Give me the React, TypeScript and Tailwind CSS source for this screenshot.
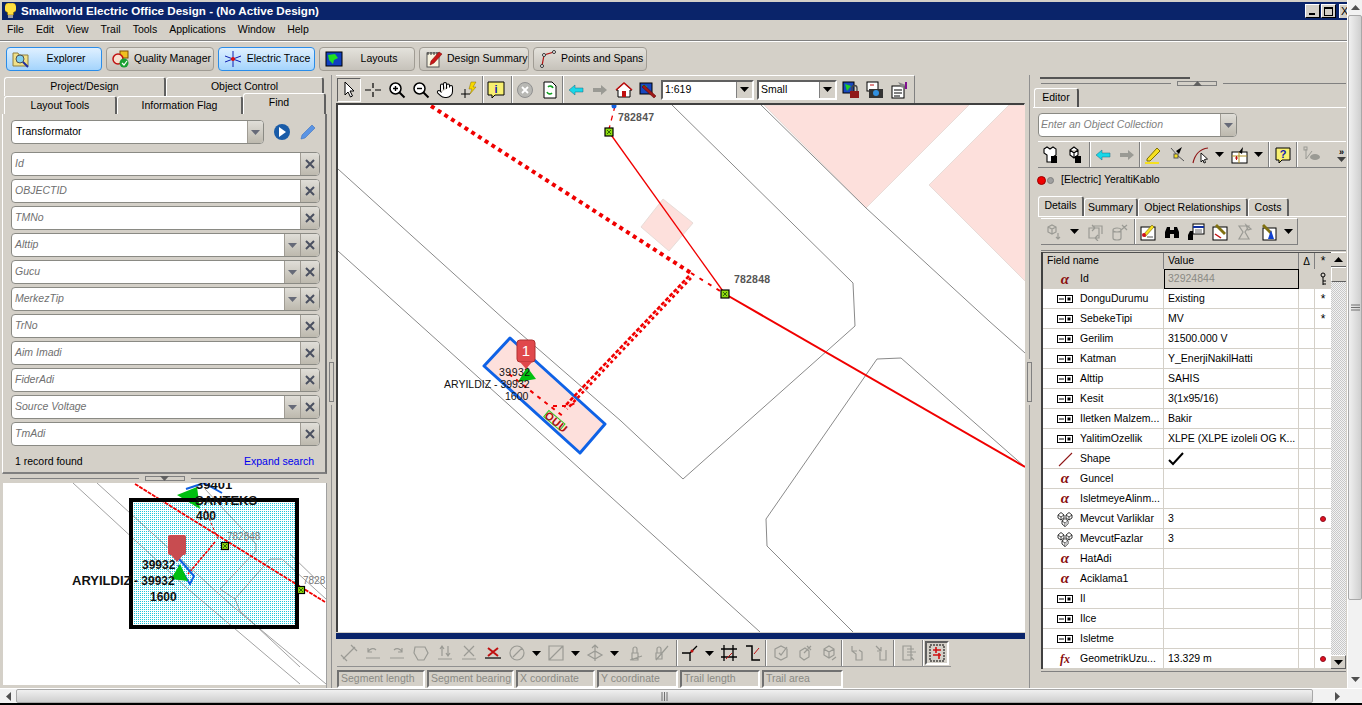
import type { ReactNode } from "react";
import { Hand } from "lucide-react";

const Ic = ({ children, s = 18 }: { children: ReactNode; s?: number }) => (
  <svg width={s} height={s} viewBox="0 0 18 18" fill="none">{children}</svg>
);
const Cell = ({ children, w = "w-[24px]" }: { children?: ReactNode; w?: string }) => (
  <div className={`${w} h-full flex items-center justify-center shrink-0`}>{children}</div>
);
const Sep = () => <div className="w-[2px] h-full shrink-0 border-l border-l-[#808080] border-r border-r-white" />;
const Caret = ({ c = "black" }: { c?: string }) => (
  <svg width="9" height="5" viewBox="0 0 9 5"><path d="M0 0h9L4.5 5z" fill={c} /></svg>
);
const CaretCell = () => <Cell w="w-[15px]"><Caret /></Cell>;

const dg = "#9a9a94";
const ArrowL = ({ c = "#18d8e8" }: { c?: string }) => (
  <Ic><path d="M2 9l6-5v3h8v4H8v3z" fill={c} stroke="#1a6a80" strokeWidth="0.5" /></Ic>
);
const ArrowR = () => <Ic><path d="M16 9l-6-5v3H2v4h8v3z" fill={dg} /></Ic>;

function GreenSq({ x, y, s = 8 }: { x: number; y: number; s?: number }) {
  return (
    <g>
      <rect x={x - s / 2} y={y - s / 2} width={s} height={s} fill="#8edc10" stroke="black" strokeWidth="1.2" />
      <path d={`M${x - 2} ${y - 2}l4 4M${x + 2} ${y - 2}l-4 4`} stroke="#1a4a00" strokeWidth="0.8" />
    </g>
  );
}

function MainMap() {
  return (
    <svg className="block" width="687" height="527" viewBox="337 104 687 527">
      <rect x="337" y="104" width="687" height="527" fill="white" />
      <g fill="#fde0dc" stroke="#e8dcd8" strokeWidth="1">
        <path d="M763 104H968L865 207z" />
        <path d="M1008 104H1025V281L928 184z" />
        <path d="M662 198L692 222L668 250L640 226z" />
        <path d="M509 337L604 423L579 452L483 365z" stroke="none" />
      </g>
      <g fill="none" stroke="#8a8a8a" strokeWidth="1">
        <path d="M337 168L505 320L620 420L682 478L854 325L852 282L671 104" />
        <path d="M337 250L568 458L759 631" />
        <path d="M760 104L865 207L988 320L1024 352" />
        <path d="M1024 466L900 357L876 358L765 518L766 545L852 631" />
      </g>
      <path d="M509 337L604 423L579 452L483 365z" fill="none" stroke="#0f62e6" strokeWidth="3" strokeLinejoin="round" />
      <g fill="none" stroke="#f00000">
        <path d="M608 131L724 293" strokeWidth="1.3" />
        <path d="M724 293L1024 466" strokeWidth="2" />
        <path d="M614 105L608 128" strokeWidth="1.3" strokeDasharray="5 5" />
        <path d="M430 105L690 272" strokeWidth="4" strokeDasharray="4 4" />
        <path d="M690 272L724 293" strokeWidth="2" strokeDasharray="4 6" />
        <path d="M688 275L563 406" strokeWidth="2.6" strokeDasharray="4 2" />
        <path d="M690 277L566 408" strokeWidth="2.6" strokeDasharray="3 3" />
        <path d="M508 373L563 416M552 405L568 405L574 402" strokeWidth="2" strokeDasharray="4 5" />
      </g>
      <circle cx="613" cy="105" r="2.5" fill="#1060e0" />
      <GreenSq x={608} y={131} />
      <GreenSq x={724} y={293} />
      <g transform="rotate(40 553 419)">
        <rect x="543" y="415" width="21" height="8" fill="none" stroke="#28d020" strokeWidth="1" />
        <text x="543" y="423" fontSize="11" fontWeight="700" fill="#b01010" letterSpacing="0.6">OUU</text>
      </g>
      <g fill="#555" fontWeight="700" fontSize="10.5" letterSpacing="0.2">
        <text x="617" y="120">782847</text>
        <text x="733" y="282">782848</text>
      </g>
      <path d="M517 381L535 378L526 366z" fill="#00c010" />
      <g fill="#111" fontSize="10.5">
        <text x="498" y="375" letterSpacing="0.5">39932</text>
        <text x="443" y="387">ARYILDIZ - 39932</text>
        <text x="504" y="399">1600</text>
      </g>
      <rect x="516" y="339" width="18" height="22" rx="3" fill="#e0484c" stroke="#b03030" />
      <path d="M519 361h12l-6 7z" fill="#e0484c" />
      <text x="525" y="355" fontSize="15" fill="white" textAnchor="middle">1</text>
    </svg>
  );
}

function OverviewMap() {
  return (
    <svg className="block" width="323" height="202" viewBox="3 484 323 202">
      <defs>
        <pattern id="stipple" width="2" height="2" patternUnits="userSpaceOnUse">
          <rect width="2" height="2" fill="white" />
          <rect width="1" height="1" fill="#1cc8dc" />
        </pattern>
      </defs>
      <rect x="3" y="484" width="323" height="202" fill="white" />
      <rect x="131" y="501" width="166" height="127" fill="url(#stipple)" />
      <g fill="none" stroke="#8a8a8a" strokeWidth="0.8">
        <path d="M73 484L188 590L300 685" />
        <path d="M97 484L230 605L326 685" />
        <path d="M205 490L256 545L256 552L220 590L235 600" />
        <path d="M270 560L282 560L326 600" />
        <path d="M270 560L235 600L240 612L300 668" />
        <path d="M290 555L326 590" />
      </g>
      <g stroke="#f00000" fill="none">
        <path d="M135 485L325 603" strokeWidth="1.8" strokeDasharray="4 1" />
        <path d="M215 543L188 575" strokeWidth="1.6" strokeDasharray="3 1" />
        <path d="M205 510L218 540" strokeWidth="1" strokeDasharray="3 2" />
      </g>
      <path d="M186 490L204 484L222 494M172 552L194 577L190 585L178 566" fill="none" stroke="#1060e0" strokeWidth="2" />
      <path d="M177 496L197 488L200 510z" fill="#00c010" />
      <path d="M171 580L188 582L180 565z" fill="#00c010" />
      <rect x="131" y="501" width="166" height="127" fill="none" stroke="black" strokeWidth="4" />
      <GreenSq x={225} y={547} s={7} />
      <GreenSq x={301} y={591} s={7} />
      <rect x="168" y="536" width="18" height="20" rx="2" fill="#c84c50" />
      <path d="M171 556h12l-6 7z" fill="#c84c50" />
      <g fill="#111" fontSize="13" fontWeight="700">
        <text x="196" y="490">39401</text>
        <text x="195" y="506">SANTEKS</text>
        <text x="196" y="521" fontSize="12">400</text>
        <text x="72" y="586">ARYILDIZ</text>
        <g fontSize="12">
          <text x="134" y="586">- 39932</text>
          <text x="142" y="570">39932</text>
          <text x="150" y="602">1600</text>
        </g>
      </g>
      <text x="227" y="541" fontSize="10" fill="#777">782848</text>
      <text x="303" y="585" fontSize="10" fill="#777">7828</text>
    </svg>
  );
}

const TopBtn = ({ label, icon, blue, w }: { label: string; icon: ReactNode; blue?: boolean; w: string }) => (
  <div
    className={`${w} h-[24px] flex items-center gap-[4px] pl-[5px] pr-[3px] rounded-[4px] border ${
      blue ? "border-[#2a8ce8] bg-gradient-to-b from-[#dff0ff] to-[#a4d4fc]" : "border-[#a09c94] bg-gradient-to-b from-[#e4e2dc] to-[#c6c2ba]"
    }`}
  >
    <span className="shrink-0 w-[18px] h-[18px]">{icon}</span>
    <span className="flex-1 text-center whitespace-nowrap">{label}</span>
  </div>
);

const Tab = ({ label, w, active }: { label: string; w: string; active?: boolean }) => (
  <div
    className={`${w} ${active ? "h-[21px] pb-[3px] pr-[10px] z-10" : "h-full"} shrink-0 flex items-center justify-center rounded-t-[3px] border-t border-l border-t-white border-l-white border-r-2 border-r-[#606060] bg-[#d4d0c8]`}
  >
    {label}
  </div>
);

const ClearX = () => (
  <div className="w-[19px] h-full shrink-0 flex items-center justify-center border-l border-l-[#a09c94] bg-gradient-to-b from-[#e0ded8] to-[#bdb9ae]">
    <svg width="10" height="10" viewBox="0 0 10 10"><path d="M1 1l8 8M9 1L1 9" stroke="#4a5060" strokeWidth="2" /></svg>
  </div>
);
const DropBtn = () => (
  <div className="w-[16px] h-full shrink-0 flex items-center justify-center border-l border-l-[#a09c94] bg-gradient-to-b from-[#e0ded8] to-[#bdb9ae]">
    <Caret c="#666a78" />
  </div>
);
const Field = ({ name, drop }: { name: string; drop?: boolean }) => (
  <div className="h-[24px] mb-[3px] flex items-stretch rounded-[4px] border border-[#8a8a84] bg-white overflow-hidden">
    <span className="flex-1 pl-[3px] italic text-[#707070] self-center">{name}</span>
    {drop && <DropBtn />}
    <ClearX />
  </div>
);

const fields: [string, boolean?][] = [
  ["Id"], ["OBJECTID"], ["TMNo"], ["Alttip", true], ["Gucu", true], ["MerkezTip", true],
  ["TrNo"], ["Aim Imadi"], ["FiderAdi"], ["Source Voltage", true], ["TmAdi"],
];

function LeftPanel() {
  return (
    <div className="w-[327px] shrink-0 flex flex-col pl-[2px]">
      <div className="h-[19px] mt-[2px] flex pl-[2px]">
        <Tab label="Project/Design" w="w-[162px]" />
        <Tab label="Object Control" w="w-[158px]" />
      </div>
      <div className="h-[21px] -mt-[3px] flex items-end pl-[2px]">
        <div className="h-[18px] flex items-end">
          <Tab label="Layout Tools" w="w-[113px]" />
          <Tab label="Information Flag" w="w-[126px]" />
        </div>
        <Tab label="Find" w="w-[83px]" active />
      </div>
      <div className="h-[360px] flex flex-col border-l border-l-white border-r-2 border-r-[#707070] border-b-2 border-b-[#808080] px-[8px] pt-[6px]">
        <div className="h-[24px] flex items-center mb-[8px]">
          <div className="w-[253px] h-full flex items-stretch rounded-[4px] border border-[#8a8a84] bg-white overflow-hidden">
            <span className="flex-1 pl-[4px] self-center">Transformator</span>
            <DropBtn />
          </div>
          <div className="ml-[10px] w-[16px] h-[16px] rounded-full bg-[#1a5ca8] flex items-center justify-center">
            <svg width="8" height="10" viewBox="0 0 8 10"><path d="M1 0l7 5-7 5z" fill="white" /></svg>
          </div>
          <svg className="ml-[9px]" width="17" height="17" viewBox="0 0 17 17">
            <path d="M2 15l1-4L13 1l3 3L6 14z" fill="#5a94e4" stroke="#3a70c0" strokeWidth="0.6" />
          </svg>
        </div>
        <div className="w-[309px]">
          {fields.map(([n, d]) => <Field key={n} name={n} drop={d} />)}
        </div>
        <div className="flex justify-between mt-[3px] pl-[4px] pr-[3px] h-[20px] items-center">
          <span>1 record found</span>
          <span className="text-[#0000ee]">Expand search</span>
        </div>
      </div>
      <Splitter />
      <div className="flex-1 min-h-0 pl-px border-r border-[#a0a0a0] overflow-hidden"><OverviewMap /></div>
    </div>
  );
}

const Splitter = () => (
  <div className="h-[9px] shrink-0 flex items-center gap-[6px] px-[8px]">
    <div className="flex-1 h-px bg-[#808080]" />
    <div className="w-[40px] h-[5px] border border-[#808080] flex items-center justify-center">
      <Caret c="#606060" />
    </div>
    <div className="flex-1 h-px bg-[#808080]" />
  </div>
);
const VSplit = () => (
  <div className="flex-1 flex flex-col items-center">
    <div className="w-px flex-1 bg-[#909090]" />
    <div className="w-[5px] h-[40px] my-[3px] border border-[#808080]" />
    <div className="w-px flex-1 bg-[#909090]" />
  </div>
);

function MapToolbar() {
  return (
    <div className="w-[579px] h-[28px] flex items-center border-r border-r-[#808080] border-t border-t-white">
      <Cell w="w-[25px]">
        <div className="w-[24px] h-[24px] flex items-center justify-center border border-t-[#606060] border-l-[#606060] border-b-white border-r-white">
          <Ic><path d="M5 1v13l3-3 2.5 5 2-1-2.5-5h4z" fill="white" stroke="black" /></Ic>
        </div>
      </Cell>
      <Cell><Ic><path d="M1 9h6M11 9h6M9 2v5M9 11v5" stroke="black" strokeWidth="1.2" /></Ic></Cell>
      <Cell><Ic><circle cx="7.5" cy="7.5" r="5.5" stroke="black" strokeWidth="1.5" fill="white" /><path d="M11.5 11.5l5 5" stroke="black" strokeWidth="2" /><path d="M5 7.5h5M7.5 5v5" stroke="black" strokeWidth="1.4" /></Ic></Cell>
      <Cell><Ic><circle cx="7.5" cy="7.5" r="5.5" stroke="black" strokeWidth="1.5" fill="white" /><path d="M11.5 11.5l5 5" stroke="black" strokeWidth="2" /><path d="M5 7.5h5" stroke="black" strokeWidth="1.4" /></Ic></Cell>
      <Cell><Hand size={18} fill="white" stroke="black" strokeWidth={1.4} /></Cell>
      <Cell><Ic><path d="M1 13h9M5 8v9" stroke="black" /><path d="M11 1h5l-3 5h3l-6 7 2-5H9z" fill="#f6d800" stroke="#8a7000" strokeWidth="0.5" /></Ic></Cell>
      <div className="w-[1px]" />
      <Sep />
      <Cell><Ic><path d="M1 1h16v13H8l-3 3v-3H1z" fill="#f8f070" stroke="black" /><text x="9" y="12" fontSize="11" fontWeight="700" fill="#1020b0" textAnchor="middle">i</text></Ic></Cell>
      <Cell w="w-[3px]" />
      <Sep />
      <Cell><Ic><circle cx="9" cy="9" r="7.5" fill="#b8b8b4" stroke="#909090" /><path d="M6 6l6 6M12 6l-6 6" stroke="white" strokeWidth="1.8" /></Ic></Cell>
      <Cell w="w-[25px]"><Ic><path d="M3 1h8l4 4v12H3z" fill="white" stroke="black" /><path d="M7 6a3 3 0 015 1M11 12a3 3 0 01-5-1" stroke="#10a020" strokeWidth="1.6" /></Ic></Cell>
      <Sep />
      <Cell><ArrowL /></Cell>
      <Cell><ArrowR /></Cell>
      <Cell><Ic><path d="M1 9l8-7 8 7h-2v7H3V9z" fill="white" stroke="black" /><path d="M1 9l8-7 8 7" stroke="#c01010" strokeWidth="1.6" /><rect x="7" y="10" width="4" height="6" fill="#c01010" /></Ic></Cell>
      <Cell><Ic><rect x="1" y="2" width="12" height="11" fill="#1848c0" stroke="black" /><path d="M3 4l5 1-2 4z" fill="#20d020" /><path d="M5 4l12 11-2 2L3 6z" fill="#a01818" stroke="#500" strokeWidth="0.5" /></Ic></Cell>
      <div className="ml-[1px] w-[93px] h-[20px] flex items-center border-2 border-t-[#606060] border-l-[#606060] border-b-white border-r-white bg-white pl-[2px] justify-between">
        <span>1:619</span>
        <div className="w-[16px] h-full flex items-center justify-center bg-[#d4d0c8] border-l border-[#808080]"><Caret /></div>
      </div>
      <div className="ml-[3px] w-[80px] h-[20px] flex items-center border-2 border-t-[#606060] border-l-[#606060] border-b-white border-r-white bg-white pl-[2px] justify-between">
        <span>Small</span>
        <div className="w-[16px] h-full flex items-center justify-center bg-[#d4d0c8] border-l border-[#808080]"><Caret /></div>
      </div>
      <div className="ml-[2px]" />
      <Cell><Ic><rect x="1" y="1" width="11" height="11" fill="#1848c0" stroke="black" /><path d="M3 3l6 2-4 5z" fill="#20d020" /><rect x="8" y="10" width="9" height="7" fill="#901818" /><path d="M10 10V7a2.5 2.5 0 015 0v3" stroke="#444" strokeWidth="1.3" /></Ic></Cell>
      <Cell><Ic><rect x="1" y="1" width="11" height="9" fill="white" stroke="black" /><path d="M4 4h4" stroke="#c01010" /><rect x="3" y="8" width="14" height="9" fill="#333" /><circle cx="10" cy="12" r="3" fill="#3090e0" /></Ic></Cell>
      <Cell><Ic><rect x="2" y="5" width="12" height="12" fill="white" stroke="black" /><path d="M4 9h8M4 12h8M4 15h6" stroke="black" /><path d="M8 1l8 3-4 3z" fill="#888" /><rect x="15" y="1" width="2" height="7" fill="#801090" /></Ic></Cell>
    </div>
  );
}

const gs = { stroke: dg, fill: "none", strokeWidth: 1.2 };
const Gi = ({ d }: { d: string }) => <Ic><path d={d} {...gs} /></Ic>;

function BottomToolbar() {
  return (
    <div className="w-[614px] h-[27px] flex items-center border-b border-b-[#909090]">
      <Cell><Gi d="M3 15L15 3M1 11l6 6M11 1l6 6" /></Cell>
      <Cell><Gi d="M2 14h14M4 8a5 5 0 018-2M4 4v4h4" /></Cell>
      <Cell><Gi d="M2 14h14M14 8a5 5 0 00-8-2M14 4v4h-4" /></Cell>
      <Cell><Gi d="M3 3h10l3 6-4 7H6L2 9z" /></Cell>
      <Cell><Gi d="M2 15h14M6 2v10M12 2v10M4 5l2-3 2 3M10 9l2 3 2-3" /></Cell>
      <Cell><Gi d="M4 2l10 10M14 2L4 12M2 15h14" /></Cell>
      <Cell><Ic><path d="M4 4l10 8M14 4L4 12" stroke="#c01010" strokeWidth="2" /><path d="M1 14h16" stroke="#202020" strokeWidth="1.4" /></Ic></Cell>
      <Cell><Gi d="M9 2a7 7 0 110 14 7 7 0 010-14zM5 13L14 4" /></Cell>
      <CaretCell />
      <Cell><Gi d="M2 2h14v14H2zM2 16L16 2" /></Cell>
      <CaretCell />
      <Cell><Gi d="M9 1v16M2 11l7-4 7 4-7 4zM6 4l3-3 3 3" /></Cell>
      <CaretCell />
      <div className="w-[3px]" />
      <Cell><Gi d="M2 16l12-4M4 16V9h6v7zM5 9V5a2 2 0 014 0v4" /></Cell>
      <Cell><Gi d="M4 16L16 2M4 9h6v6H4zM5 9V5a2 2 0 014 0v4" /></Cell>
      <div className="w-[3px]" />
      <Sep />
      <Cell><Ic><path d="M1 9h8M9 9v8M9 9l7-7" stroke="black" strokeWidth="1.3" /><circle cx="11" cy="7" r="1.5" fill="#c01010" /></Ic></Cell>
      <CaretCell />
      <Cell><Ic><path d="M4 1v16M13 1v16M1 5h16M1 13h16" stroke="black" strokeWidth="1.3" /><path d="M6 15l6-6" stroke="#c01010" /></Ic></Cell>
      <Cell><Ic><path d="M2 2h6v14h8" stroke="black" strokeWidth="1.5" /><path d="M10 10l5-6" stroke="#c01010" /></Ic></Cell>
      <Sep />
      <div className="w-[2px]" />
      <Cell><Gi d="M3 5l6-3 6 3v8l-6 3-6-3zM7 9l2 2 6-8" /></Cell>
      <Cell><Gi d="M4 7l5-3 4 3v6l-5 3-4-3zM8 9l7-7M11 2l4 4" /></Cell>
      <Cell><Gi d="M4 5l5-3 5 3v6l-5 3-5-3zM9 8v6M4 5l5 3 5-3M12 16l4-3" /></Cell>
      <Sep />
      <div className="w-[2px]" />
      <Cell><Gi d="M4 2v5h5M4 7l4 3v6h6V8l-3-2" /></Cell>
      <Cell><Gi d="M4 2l5 5M9 3v4H5M8 8v8h6V6" /></Cell>
      <Sep />
      <div className="w-[2px]" />
      <Cell><Gi d="M3 2h8v14H3zM7 5h7M7 8h9M7 11h6M11 13l3 3" /></Cell>
      <div className="w-px" />
      <Sep />
      <div className="w-[24px] h-[24px] ml-px flex items-center justify-center border-2 border-t-[#606060] border-l-[#606060] border-b-white border-r-white">
        <Ic><rect x="2" y="1" width="14" height="16" fill="none" stroke="black" strokeDasharray="2 1" /><path d="M5 6h8M8 3v6M5 11h8M11 9v6" stroke="#d01010" strokeWidth="1.6" /></Ic>
      </div>
    </div>
  );
}

const Stat = ({ label, w }: { label: string; w: string }) => (
  <div className={`${w} h-[18px] shrink-0 flex items-center pl-[2px] whitespace-nowrap overflow-hidden border-2 border-t-[#707070] border-l-[#707070] border-b-white border-r-white text-[#8a8a84]`}>
    {label}
  </div>
);

function Center() {
  return (
    <div className="w-[689px] shrink-0 flex flex-col">
      <MapToolbar />
      <div className="w-[689px] h-[529px] border-t-2 border-t-[#404040] border-l-2 border-l-[#404040] border-r border-r-white">
        <MainMap />
      </div>
      <div className="h-[6px] mt-px bg-[#0a246a]" />
      <div className="mt-px pl-px"><BottomToolbar /></div>
      <div className="mt-[3px] pl-px flex gap-[2px]">
        <Stat label="Segment length" w="w-[88px]" />
        <Stat label="Segment bearing" w="w-[87px]" />
        <Stat label="X coordinate" w="w-[79px]" />
        <Stat label="Y coordinate" w="w-[81px]" />
        <Stat label="Trail length" w="w-[80px]" />
        <Stat label="Trail area" w="w-[81px]" />
      </div>
    </div>
  );
}

const Alpha = () => <span className="text-[#8a1010] italic font-bold text-[15px] leading-none [font-family:'Liberation_Serif',serif]">α</span>;
const Fx = () => <span className="text-[#8a1010] italic font-bold text-[12px] leading-none [font-family:'Liberation_Serif',serif]">fx</span>;
const FieldIc = () => (
  <svg width="16" height="8" viewBox="0 0 16 8"><rect x="0.5" y="0.5" width="8" height="7" fill="white" stroke="black" /><rect x="8.5" y="0.5" width="7" height="7" fill="white" stroke="black" /><path d="M2 4h5" stroke="black" /><rect x="10.5" y="2.5" width="3" height="3" fill="black" /></svg>
);
const LineIc = () => <svg width="16" height="16" viewBox="0 0 16 16"><path d="M2 15L15 2" stroke="#901818" strokeWidth="1.1" /></svg>;
const CubeIc = () => (
  <svg width="16" height="16" viewBox="0 0 16 16">
    <path d="M1 4l3-2.500 3 2.500v3L4 9 1 7zM9 4l3-2.500 3 2.500v3l-3 2-3-2zM5 10l3-2.500 3 2.500v3l-3 2.500L5 13z" fill="white" stroke="#222" strokeWidth="0.9" />
    <path d="M1 4l3 2 3-2M4 6v3M9 4l3 2 3-2M12 6v3M5 10l3 2 3-2M8 12v3.500" stroke="#222" strokeWidth="0.8" fill="none" />
    <path d="M8 12l3-2v3l-3 2.500z" fill="#c0c0c0" />
  </svg>
);
const Dot = () => <span className="w-[6px] h-[6px] rounded-full bg-[#e01020] border border-[#901020] block" />;
const Star = () => <span className="text-[12px] leading-none">*</span>;

type Row = { i: ReactNode; n: string; v?: ReactNode; m?: ReactNode };
const fi = <FieldIc />;
const al = <Alpha />;
const cu = <CubeIc />;
const rows: Row[] = [
  { i: fi, n: "DonguDurumu", v: "Existing", m: <Star /> },
  { i: fi, n: "SebekeTipi", v: "MV", m: <Star /> },
  { i: fi, n: "Gerilim", v: "31500.000 V" },
  { i: fi, n: "Katman", v: "Y_EnerjiNakilHatti" },
  { i: fi, n: "Alttip", v: "SAHIS" },
  { i: fi, n: "Kesit", v: "3(1x95/16)" },
  { i: fi, n: "Iletken Malzem...", v: "Bakir" },
  { i: fi, n: "YalitimOzellik", v: "XLPE (XLPE izoleli OG K..." },
  { i: <LineIc />, n: "Shape", v: <svg width="16" height="14" viewBox="0 0 16 14"><path d="M1 8l4 4L15 1" stroke="black" strokeWidth="2" fill="none" /></svg> },
  { i: al, n: "Guncel" },
  { i: al, n: "IsletmeyeAlinm..." },
  { i: cu, n: "Mevcut Varliklar", v: "3", m: <Dot /> },
  { i: cu, n: "MevcutFazlar", v: "3" },
  { i: al, n: "HatAdi" },
  { i: al, n: "Aciklama1" },
  { i: fi, n: "Il" },
  { i: fi, n: "Ilce" },
  { i: fi, n: "Isletme" },
  { i: <Fx />, n: "GeometrikUzu...", v: "13.329 m", m: <Dot /> },
];

function Table() {
  return (
    <div className="mt-[5px] ml-[8px] border-t border-t-[#808080]">
      <div className="mt-px flex border-l-2 border-l-[#404040]">
        <div className="w-[288px]">
          <div className="h-[17px] flex border-t border-t-[#505050] bg-[#d4d0c8]">
            <div className="w-[121px] pl-[4px] flex items-center border-r border-r-[#808080]">Field name</div>
            <div className="w-[135px] pl-[4px] flex items-center border-r border-r-[#808080]">Value</div>
            <div className="w-[16px] flex items-center justify-center border-r border-r-[#808080] text-[10px]">Δ</div>
            <div className="w-[16px] flex items-center justify-center"><Star /></div>
          </div>
          <div className="h-[20px] flex bg-[#d4d0c8]">
            <div className="w-[36px] flex items-center justify-center pl-[8px]"><Alpha /></div>
            <div className="w-[85px] pl-[1px] flex items-center">Id</div>
            <div className="w-[135px] pl-[3px] flex items-center border border-black text-[#8a8a84]">32924844</div>
            <div className="w-[16px]" />
            <div className="w-[16px] flex items-center justify-center">
              <svg width="8" height="14" viewBox="0 0 8 14"><circle cx="4" cy="3" r="2" fill="none" stroke="black" /><path d="M4 5v8M4 9h3M4 12h3" stroke="black" /></svg>
            </div>
          </div>
          {rows.map((r) => (
            <div key={r.n} className="h-[20px] flex bg-white border-b border-b-[#d4d0c8]">
              <div className="w-[36px] flex items-center justify-center pl-[8px] shrink-0">{r.i}</div>
              <div className="w-[85px] pl-[1px] flex items-center whitespace-nowrap overflow-hidden border-r border-r-[#d4d0c8] shrink-0">{r.n}</div>
              <div className="w-[135px] pl-[4px] flex items-center whitespace-nowrap overflow-hidden border-r border-r-[#d4d0c8] shrink-0">{r.v}</div>
              <div className="w-[16px] border-r border-r-[#d4d0c8] shrink-0" />
              <div className="w-[16px] flex items-center justify-center shrink-0">{r.m}</div>
            </div>
          ))}
        </div>
        <div className="w-[15px] flex flex-col bg-[repeating-conic-gradient(#c8c8c8_0_25%,#f2f2f2_0_50%)] bg-[length:2px_2px]">
          <div className="h-[15px] flex items-center justify-center bg-[#d4d0c8] border-b border-b-[#606060] border-t border-t-white"><svg width="9" height="5" viewBox="0 0 9 5"><path d="M0 5h9L4.5 0z" fill="black" /></svg></div>
          <div className="h-[15px] bg-[#d4d0c8] border-b border-b-[#606060] border-t border-t-white border-l border-l-white" />
          <div className="flex-1" />
          <div className="h-[14px] flex items-center justify-center bg-[#d4d0c8] border-b border-b-[#606060] border-r border-r-[#606060] border-t border-t-white"><Caret /></div>
        </div>
      </div>
      <div className="mt-[2px] h-px bg-[#808080]" />
    </div>
  );
}

function RightPanel() {
  return (
    <div className="w-[313px] shrink-0 flex flex-col">
      <div className="mt-[2px] ml-[7px] w-[150px] h-[2px] bg-[#555]" />
      <div className="h-[9px] flex items-center gap-[6px] pl-[8px]">
        <div className="flex-1 h-px bg-[#808080]" />
        <div className="w-[40px] h-[5px] border border-[#808080] flex items-center justify-center"><svg width="9" height="5" viewBox="0 0 9 5"><path d="M0 5h9L4.5 0z" fill="#606060" /></svg></div>
        <div className="w-[123px] h-px bg-[#808080]" />
      </div>
      <div className="h-[20px] flex border-b border-b-white pl-px">
        <div className="w-[45px] flex items-center justify-center rounded-t-[3px] border-t border-l border-t-white border-l-white border-r-2 border-r-[#505050]">Editor</div>
      </div>
      <div className="mt-[5px] ml-[5px] w-[199px] h-[24px] flex items-stretch rounded-[4px] border border-[#8a8a84] bg-white overflow-hidden">
        <span className="flex-1 pl-[2px] italic text-[#808080] self-center">Enter an Object Collection</span>
        <DropBtn />
      </div>
      <div className="mt-[4px] ml-[5px] h-[27px] flex items-center border-y border-t-white border-b-[#808080]">
        <Cell><Ic><path d="M3 3l3-2 3 2 3-2 3 2v6l-3 2v5H6V9L3 7z" fill="white" stroke="black" strokeWidth="1.1" /><rect x="10" y="10" width="6" height="7" fill="black" /></Ic></Cell>
        <Cell><Ic><path d="M5 4l4-3 4 3v5l-4 3-4-3zM5 4l4 3 4-3M9 7v5" fill="white" stroke="black" strokeWidth="1.1" /><rect x="10" y="10" width="6" height="7" fill="black" /></Ic></Cell>
        <div className="w-[3px]" /><Sep />
        <Cell><ArrowL /></Cell>
        <Cell><ArrowR /></Cell>
        <Sep />
        <Cell><Ic><path d="M3 13L13 2l3 3L6 15H3z" fill="#f6e020" stroke="#807000" /><path d="M1 17h14" stroke="#f6e020" strokeWidth="2" /></Ic></Cell>
        <Cell><Ic><path d="M3 2l6 7 7 6" stroke="#555" /><rect x="6" y="8" width="4" height="4" fill="#f6e020" stroke="#555" /><path d="M14 1l-3 7-3-3z" fill="black" /></Ic></Cell>
        <Cell><Ic><path d="M1 17C3 8 8 3 16 2" stroke="#901818" strokeWidth="1.2" /><path d="M9 7v9l2-2 1 3 1.500-.5-1-3 3-.5z" fill="white" stroke="black" strokeWidth="0.9" /></Ic></Cell>
        <Cell w="w-[14px]"><Caret /></Cell>
        <Cell w="w-[25px]"><Ic><rect x="2" y="6" width="15" height="11" fill="white" stroke="black" /><path d="M2 10h15M9 6v11" stroke="#b09020" /><path d="M13 1l-1 7-3-2z" fill="black" /><path d="M5 12h3M6.500 10v4" stroke="#c01010" /></Ic></Cell>
        <Cell w="w-[14px]"><Caret /></Cell>
        <div className="w-[3px]" /><Sep />
        <Cell w="w-[26px]"><Ic><path d="M2 2h14v12H8l-3 3v-3H2z" fill="#f8f070" stroke="black" /><text x="9" y="12" fontSize="11" fontWeight="700" fill="#1020b0" textAnchor="middle">?</text></Ic></Cell>
        <Sep />
        <Cell w="w-[28px]"><Ic><path d="M3 3v10l6-8" stroke={dg} /><rect x="1" y="1" width="3" height="3" fill="none" stroke={dg} /><ellipse cx="12" cy="11" rx="5" ry="3" fill={dg} /></Ic></Cell>
        <div className="w-[12px]" />
        <div className="flex flex-col items-center gap-[1px]">
          <span className="text-[9px] font-bold leading-[8px]">»</span>
          <Caret c="#404040" />
        </div>
      </div>
      <div className="h-[22px] mt-px flex items-center pl-[4px] gap-[1px]">
        <span className="w-[9px] h-[9px] rounded-full bg-[#f00000] border border-[#900]" />
        <span className="w-[7px] h-[7px] rounded-full bg-[#a0a0a0] border border-[#808080]" />
        <span className="ml-[6px]">[Electric] YeraltiKablo</span>
      </div>
      <div className="mt-[6px] ml-[5px] h-[20px] flex items-end border-b border-b-white">
        <div className="w-[46px] h-[20px] pb-[2px] flex items-center justify-center rounded-t-[3px] border-t border-l border-t-white border-l-white border-r-2 border-r-[#606060]">Details</div>
        <div className="w-[54px] h-[18px] flex items-center justify-center rounded-t-[3px] border-t border-l border-t-white border-l-white border-r-2 border-r-[#606060]">Summary</div>
        <div className="w-[110px] h-[18px] flex items-center justify-center rounded-t-[3px] border-t border-l border-t-white border-l-white border-r-2 border-r-[#606060]">Object Relationships</div>
        <div className="w-[41px] h-[18px] flex items-center justify-center rounded-t-[3px] border-t border-l border-t-white border-l-white border-r-2 border-r-[#606060]">Costs</div>
      </div>
      <div className="mt-px ml-[8px] w-[257px] h-[27px] flex items-center border-b border-b-[#808080] border-r border-r-[#808080] border-t border-t-white">
        <Cell><Gi d="M4 4l4-2 4 2v5l-4 2-4-2zM4 4l4 2 4-2M8 6v5M14 10v6M12 14l2 2 2-2" /></Cell>
        <Cell w="w-[18px]"><Caret /></Cell>
        <Cell><Gi d="M3 5h10v10H3zM6 3h10v8M6 8l3-3-3-3M12 12l-3 3 3 3" /></Cell>
        <Cell w="w-[24px]"><Gi d="M3 7a4 2 0 008 0 4 2 0 00-8 0v8a4 2 0 008 0V7M11 7l6-5M12 2l5 5" /></Cell>
        <div className="w-[3px]" /><Sep />
        <Cell><Ic><rect x="2" y="4" width="14" height="13" fill="white" stroke="black" /><path d="M4 12L13 2l2 2-9 10z" fill="#f6e020" stroke="#706000" strokeWidth="0.6" /><circle cx="5" cy="12" r="2" fill="#d01020" /><path d="M8 14h6" stroke="#555" /></Ic></Cell>
        <Cell><Ic><path d="M2 15V9l2-5h3v11zM16 15V9l-2-5h-3v11zM7 7h4v4H7z" fill="black" /></Ic></Cell>
        <Cell><Ic><rect x="6" y="1" width="11" height="10" fill="white" stroke="black" /><path d="M6 4h11" stroke="#1030a0" strokeWidth="2" /><path d="M8 7h7M8 9h7" stroke="#666" /><path d="M1 17v-5l2-4h3v9zM8 17v-6" fill="black" /></Ic></Cell>
        <Cell><Ic><rect x="2" y="4" width="14" height="13" fill="white" stroke="black" /><path d="M4 3l9 9 2-2-9-9z" fill="#807010" /><path d="M4 11l6 4" stroke="#c01010" strokeWidth="1.500" /></Ic></Cell>
        <Cell><Gi d="M4 3l10 0-4 6 4 7H4l4-7zM11 2l5 4-3 1z" /></Cell>
        <Cell><Ic><rect x="4" y="5" width="13" height="12" fill="white" stroke="black" /><path d="M3 3l8 8 2-2-8-8z" fill="#807010" /><path d="M9 16l3-9 3 9" fill="#1040d0" /></Ic></Cell>
        <Cell w="w-[16px]"><Caret /></Cell>
      </div>
      <Table />
    </div>
  );
}

const VScroll = () => (
  <div className="w-[15px] shrink-0 flex flex-col bg-[#f2f2f2] border-l border-l-white">
    <div className="h-[15px] flex items-center justify-center"><svg width="9" height="5" viewBox="0 0 9 5"><path d="M0 5h9L4.5 0z" fill="#505050" /></svg></div>
    <div className="h-[585px] shrink-0 flex items-center justify-center rounded-[2px] border border-[#a8a8a8] bg-gradient-to-r from-[#f0f0f0] to-[#cfcfcf]">
      <svg width="9" height="7" viewBox="0 0 9 7"><path d="M0 1h9M0 3.500h9M0 6h9" stroke="#707070" /></svg>
    </div>
    <div className="flex-1 flex items-end justify-center pb-[6px]"><Caret c="#505050" /></div>
  </div>
);
const HScroll = () => (
  <div className="h-[15px] shrink-0 flex items-center bg-[#f2f2f2] border-t border-t-white">
    <div className="w-[16px] flex justify-center"><svg width="5" height="9" viewBox="0 0 5 9"><path d="M5 0v9L0 4.500z" fill="#505050" /></svg></div>
    <div className="w-[1297px] h-[14px] flex items-center justify-center rounded-[2px] border border-[#a8a8a8] bg-gradient-to-b from-[#f0f0f0] to-[#cfcfcf]">
      <svg width="7" height="9" viewBox="0 0 7 9"><path d="M1 0v9M3.500 0v9M6 0v9" stroke="#707070" /></svg>
    </div>
    <div className="flex-1 flex justify-start pl-[22px]"><svg width="5" height="9" viewBox="0 0 5 9"><path d="M0 0v9l5-4.500z" fill="#505050" /></svg></div>
  </div>
);

export default function App() {
  const menus = ["File", "Edit", "View", "Trail", "Tools", "Applications", "Window", "Help"];
  return (
    <div className="w-[1362px] h-[705px] overflow-hidden flex flex-col bg-[#d4d0c8] text-[10.5px] text-black [font-family:'Liberation_Sans',Arial,sans-serif]">
      <div className="flex-1 min-h-0 flex">
        <div className="w-[1347px] shrink-0 flex flex-col pt-[2px]">
          <div className="h-[18px] ml-[2px] flex items-center bg-[#0a246a] text-white font-bold text-[11.6px]">
            <svg className="ml-[3px] mr-[5px]" width="11" height="16" viewBox="0 0 11 16"><path d="M5.500 0a5 5 0 013 9.500V12h-6V9.500A5 5 0 015.500 0z" fill="#ffe040" stroke="#806000" strokeWidth="0.6" /><rect x="3" y="12" width="5" height="3" fill="#a0a0a0" /></svg>
            <span>Smallworld Electric Office Design - (No Active Design)</span>
            <div className="ml-auto flex gap-px items-center">
              <div className="w-[15px] h-[14px] bg-[#d4d0c8] border border-t-white border-l-white border-b-black border-r-black flex items-end justify-center pb-[2px] pr-[2px]"><div className="w-[6px] h-[2px] bg-black" /></div>
              <div className="w-[15px] h-[14px] bg-[#d4d0c8] border border-t-white border-l-white border-b-black border-r-black flex items-center justify-center"><div className="w-[9px] h-[9px] border border-black border-t-2" /></div>
              <div className="ml-[2px] w-[8px] h-[14px] bg-[#d4d0c8] border-t border-l border-t-white border-l-white overflow-hidden font-normal text-[11px] leading-[12px] text-black pl-px">X</div>
            </div>
          </div>
          <div className="h-[20px] ml-[7px] flex items-center gap-[12px]">
            {menus.map((m) => <span key={m}>{m}</span>)}
          </div>
          <div className="border-t border-t-[#808080] border-b border-b-white" />
          <div className="mt-[5px] ml-[6px] flex gap-[4px]">
            <TopBtn w="w-[96px]" blue label="Explorer" icon={<Ic><path d="M1 3h5l1 2h9v11H1z" fill="#f0e088" stroke="#908040" /><circle cx="8" cy="9" r="4" fill="#80d0f0" stroke="#505050" /><path d="M11 12l5 5" stroke="#2030a0" strokeWidth="2" /></Ic>} />
            <TopBtn w="w-[108px]" label="Quality Manager" icon={<Ic><rect x="8" y="1" width="8" height="7" fill="#f0c020" stroke="#805000" /><circle cx="6" cy="9" r="5" fill="#f8e0d0" stroke="#c01010" strokeWidth="1.500" /><circle cx="12" cy="13" r="4.500" fill="#18a030" /><path d="M10 13l2 2 3-4" stroke="white" strokeWidth="1.200" /></Ic>} />
            <TopBtn w="w-[97px]" blue label="Electric Trace" icon={<Ic><path d="M9 1v16M1 6l16 6M1 12l16-6" stroke="#1020b0" strokeWidth="1" /><circle cx="9" cy="9" r="2" fill="#e01010" /></Ic>} />
            <TopBtn w="w-[96px]" label="Layouts" icon={<Ic><rect x="1" y="2" width="16" height="14" fill="#1040c0" stroke="black" /><path d="M3 5l7-1 3 4-4 2-1 4-4-4z" fill="#20e020" /></Ic>} />
            <TopBtn w="w-[110px]" label="Design Summary" icon={<Ic><rect x="2" y="3" width="12" height="14" fill="#f8f4e0" stroke="#555" /><path d="M3 2v3M6 2v3M9 2v3M12 2v3" stroke="#333" /><path d="M5 15l1-4 8-9 3 2-8 9z" fill="#c81818" stroke="#700" strokeWidth="0.5" /></Ic>} />
            <TopBtn w="w-[114px]" label="Points and Spans" icon={<Ic><path d="M3 16L5 5L15 2" stroke="#b01010" strokeWidth="1.200" /><circle cx="3" cy="16" r="1.500" fill="white" stroke="#333" /><circle cx="5" cy="5" r="1.500" fill="white" stroke="#333" /><circle cx="15" cy="2" r="1.500" fill="white" stroke="#333" /></Ic>} />
          </div>
          <div className="flex-1 min-h-0 flex mt-[4px]">
            <LeftPanel />
            <div className="w-[9px] flex shrink-0"><VSplit /></div>
            <Center />
            <div className="w-[8px] flex shrink-0"><VSplit /></div>
            <RightPanel />
          </div>
        </div>
        <VScroll />
      </div>
      <HScroll />
      <div className="h-[2px] shrink-0 bg-black" />
    </div>
  );
}
